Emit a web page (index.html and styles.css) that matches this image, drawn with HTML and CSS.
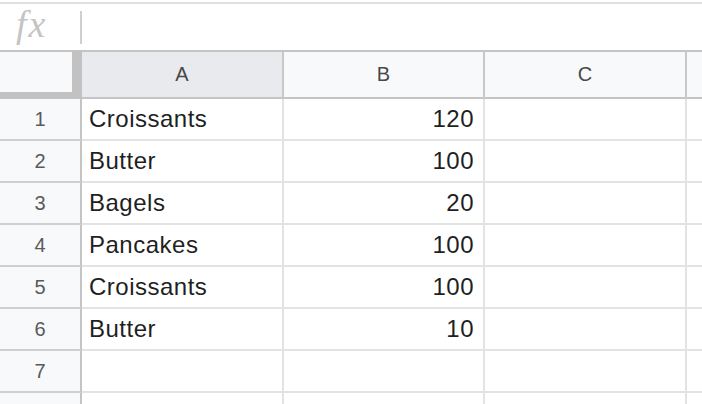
FILE: index.html
```html
<!DOCTYPE html>
<html lang="en">
<head>
    <meta charset="UTF-8">
    <title>Sheet</title>
    <link rel="stylesheet" href="styles.css">
</head>
<body>

    <div class="top-line"></div>

    <!-- formula bar -->
    <div class="formula-bar">
        <span class="fx">fx</span>
        <span class="fx-divider"></span>
    </div>

    <!-- grid -->
    <div class="sheet">
        <div class="corner"></div>
        <div class="col-head selected">A</div>
        <div class="col-head">B</div>
        <div class="col-head">C</div>
        <div class="col-head"></div>

        <div class="row-head">1</div>
        <div class="cell">Croissants</div>
        <div class="cell num">120</div>
        <div class="cell"></div>
        <div class="cell"></div>

        <div class="row-head">2</div>
        <div class="cell">Butter</div>
        <div class="cell num">100</div>
        <div class="cell"></div>
        <div class="cell"></div>

        <div class="row-head">3</div>
        <div class="cell">Bagels</div>
        <div class="cell num">20</div>
        <div class="cell"></div>
        <div class="cell"></div>

        <div class="row-head">4</div>
        <div class="cell">Pancakes</div>
        <div class="cell num">100</div>
        <div class="cell"></div>
        <div class="cell"></div>

        <div class="row-head">5</div>
        <div class="cell">Croissants</div>
        <div class="cell num">100</div>
        <div class="cell"></div>
        <div class="cell"></div>

        <div class="row-head">6</div>
        <div class="cell">Butter</div>
        <div class="cell num">10</div>
        <div class="cell"></div>
        <div class="cell"></div>

        <div class="row-head">7</div>
        <div class="cell"></div>
        <div class="cell"></div>
        <div class="cell"></div>
        <div class="cell"></div>

        <div class="row-head partial">8</div>
        <div class="cell"></div>
        <div class="cell"></div>
        <div class="cell"></div>
        <div class="cell"></div>
    </div>

</body>
</html>
```

FILE: styles.css
```css
html, body {
    margin: 0;
    padding: 0;
    background: white;
    overflow: hidden;
}

body {
    font-family: "Liberation Sans", Arial, sans-serif;
    color: #222;
}

.top-line {
    height: 2px;
    margin-top: 2px;
    background: #e0e0e3;
}

.formula-bar {
    height: 46px;
    display: flex;
    align-items: center;
}

.fx {
    width: 80px;
    padding-left: 16px;
    box-sizing: border-box;
    font-family: "Liberation Serif", "Times New Roman", serif;
    font-style: italic;
    font-size: 38px;
    color: #c4c4c4;
    line-height: 1;
    margin-top: -6px;
    letter-spacing: 2px;
}

.fx-divider {
    width: 2px;
    height: 33px;
    background: #cfcfcf;
}

.sheet {
    display: grid;
    grid-template-columns: 82px 202px 201px 202px 1fr;
    grid-template-rows: 49px repeat(8, 42px);
}

.corner,
.col-head,
.row-head,
.cell {
    box-sizing: border-box;
}

.corner {
    background: #f8f9fa;
    border-top: 2px solid #c4c4c4;
    border-right: 10px solid #c2c2c2;
    border-bottom: 7px solid #c2c2c2;
}

.col-head {
    background: #f8f9fa;
    border-top: 2px solid #c4c4c4;
    border-bottom: 2px solid #c4c4c4;
    border-right: 2px solid #c8c8c8;
    display: flex;
    align-items: center;
    justify-content: center;
    font-size: 20px;
    color: #484848;
}

.col-head.selected {
    background: #e8eaed;
}

.row-head {
    background: #f8f9fa;
    border-right: 2px solid #c4c4c4;
    border-bottom: 2px solid #cfcfcf;
    display: flex;
    align-items: center;
    justify-content: center;
    font-size: 20px;
    color: #5a5a5a;
}

/* last row is only partly on screen */
.row-head.partial {
    align-items: flex-start;
    padding-top: 8px;
}

.cell {
    border-right: 2px solid #e2e3e3;
    border-bottom: 2px solid #e2e3e3;
    display: flex;
    align-items: center;
    padding: 0 9px 0 7px;
    font-size: 24px;
    letter-spacing: 0.5px;
    color: #1f1f1f;
    white-space: nowrap;
}

.cell.num {
    justify-content: flex-end;
}
```
